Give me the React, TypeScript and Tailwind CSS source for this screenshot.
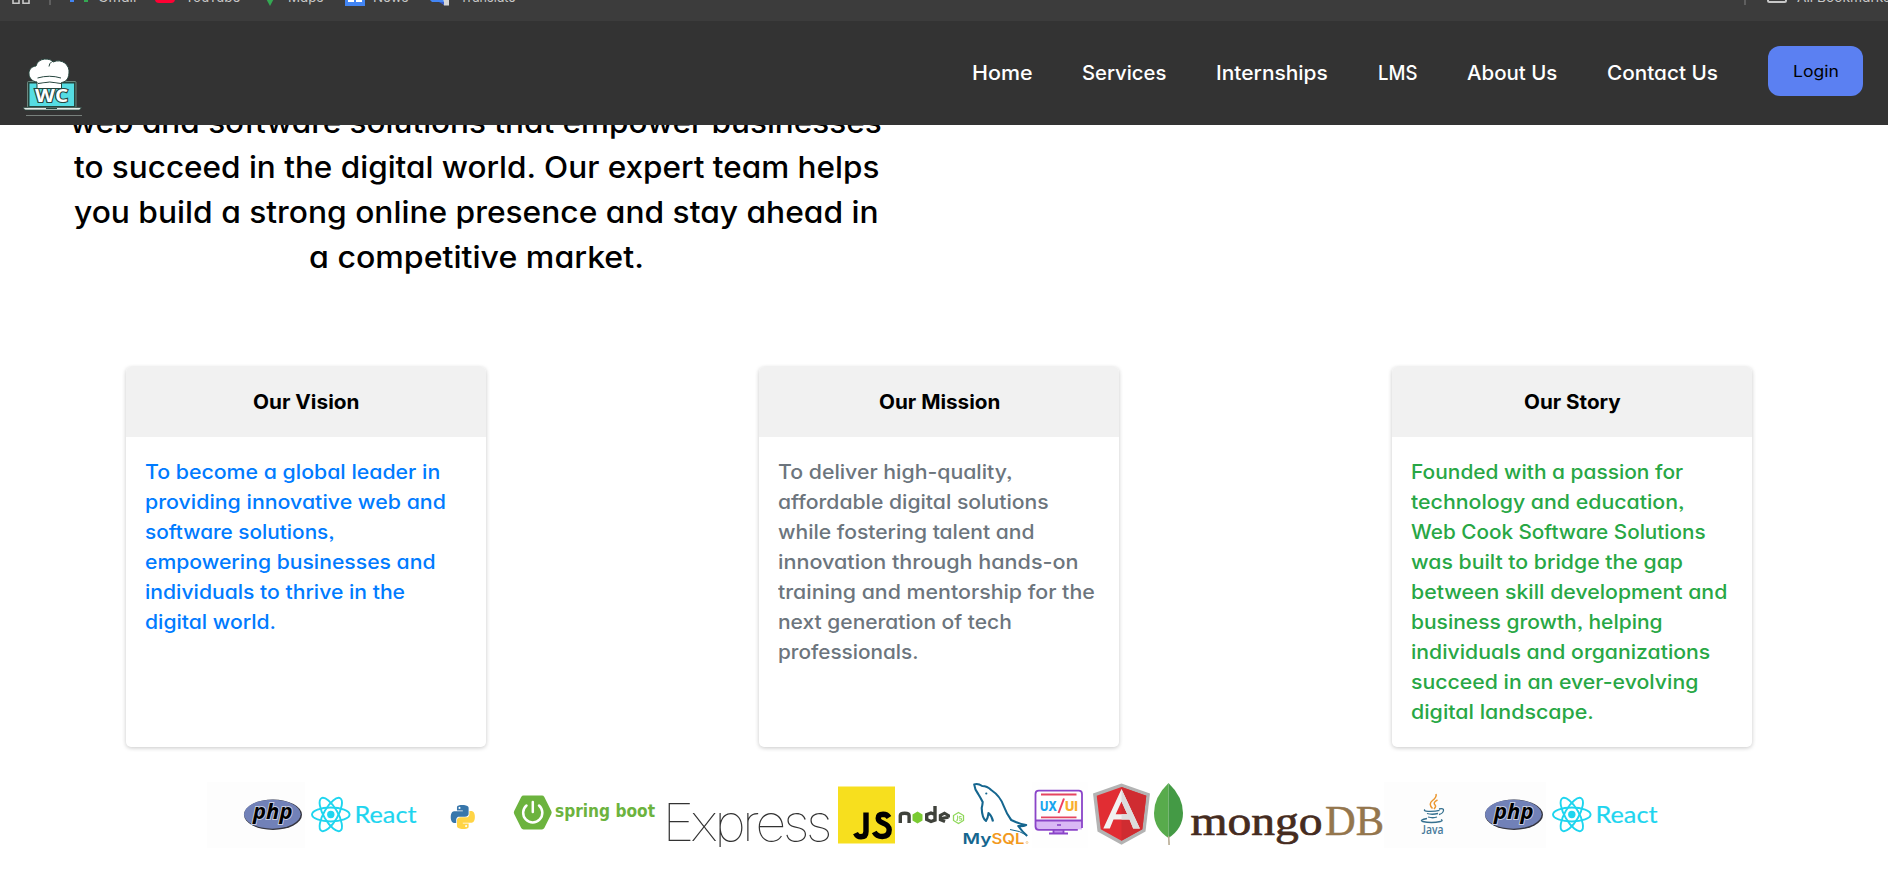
import { useLayoutEffect, useRef, useState, type ReactNode } from 'react';

/* Single line of text, widened so that it fills the given width. */
function Fit({ children, w, className = '' }: { children: string; w: number; className?: string }) {
  const ref = useRef<HTMLSpanElement>(null);
  const [scale, setScale] = useState(1);
  useLayoutEffect(() => {
    if (!ref.current) return;
    setScale(w / ref.current.offsetWidth);
  }, [w, children]);
  return (
    <span className="inline-block text-left" style={{ width: w }}>
      <span
        ref={ref}
        className={`inline-block origin-left whitespace-nowrap ${className}`}
        style={{ transform: `scaleX(${scale})` }}
      >
        {children}
      </span>
    </span>
  );
}

const navItems: [string, number][] = [
  ['Home', 60],
  ['Services', 84],
  ['Internships', 112],
  ['LMS', 39],
  ['About Us', 90],
  ['Contact Us', 111],
];

const intro: [string, number][] = [
  ['web and software solutions that empower businesses', 812],
  ['to succeed in the digital world. Our expert team helps', 805],
  ['you build a strong online presence and stay ahead in', 805],
  ['a competitive market.', 335],
];

const cards: { title: string; titleW: number; color: string; lines: [string, number][] }[] = [
  {
    title: 'Our Vision',
    titleW: 106,
    color: 'text-[#007bff]',
    lines: [
      ['To become a global leader in', 295],
      ['providing innovative web and', 301],
      ['software solutions,', 190],
      ['empowering businesses and', 291],
      ['individuals to thrive in the', 260],
      ['digital world.', 131],
    ],
  },
  {
    title: 'Our Mission',
    titleW: 121,
    color: 'text-[#6c757d]',
    lines: [
      ['To deliver high-quality,', 235],
      ['affordable digital solutions', 271],
      ['while fostering talent and', 257],
      ['innovation through hands-on', 301],
      ['training and mentorship for the', 317],
      ['next generation of tech', 234],
      ['professionals.', 141],
    ],
  },
  {
    title: 'Our Story',
    titleW: 97,
    color: 'text-[#28a745]',
    lines: [
      ['Founded with a passion for', 272],
      ['technology and education,', 274],
      ['Web Cook Software Solutions', 295],
      ['was built to bridge the gap', 272],
      ['between skill development and', 316],
      ['business growth, helping', 252],
      ['individuals and organizations', 299],
      ['succeed in an ever-evolving', 287],
      ['digital landscape.', 183],
    ],
  },
];

function BookmarksBar() {
  return (
    <div className="h-[21px] overflow-hidden bg-[#3c3c3c]">
      <div className="-mt-[15px] flex h-6 items-center text-[13px] leading-6 text-[#c7c7c7]">
        <svg className="ml-3 shrink-0" width="18" height="24" viewBox="0 0 18 24" fill="none" stroke="#c7c7c7" strokeWidth="1.6">
          <path d="M1 2h6v6H1zM11 2h6v6h-6zM1 12.5h6v5.700H1zM11 12.500h6v5.700h-6z" />
        </svg>
        <svg className="ml-[19px] shrink-0" width="2" height="24"><rect width="2" height="20" fill="#5f5f5f" /></svg>
        <svg className="ml-[19px] shrink-0" width="18" height="24">
          <path d="M0 4h4v13H0z" fill="#4285f4" /><path d="M14 4h4v13h-4z" fill="#34a853" /><path d="M0 2l9 6 9-6v4l-9 7-9-7z" fill="#ea4335" />
        </svg>
        <div className="ml-2.5 w-[57px]"><Fit w={38}>Gmail</Fit></div>
        <svg className="shrink-0" width="20" height="24"><rect y="4" width="20" height="14" rx="4" fill="#ff0033" /></svg>
        <div className="ml-2.5 w-[75px]"><Fit w={55}>YouTube</Fit></div>
        <svg className="shrink-0" width="20" height="24"><path d="M3 8h14l-7 13z" fill="#34a853" /></svg>
        <div className="ml-[8px] w-[57px]"><Fit w={36}>Maps</Fit></div>
        <svg className="shrink-0" width="20" height="24">
          <rect y="3" width="20" height="18" fill="#4285f4" /><path d="M3 12h6v5H3zM11 10h6v2h-6zM11 15h6v2h-6z" fill="#fff" />
        </svg>
        <div className="ml-2 w-[57px]"><Fit w={36}>News</Fit></div>
        <svg className="shrink-0" width="20" height="24">
          <path d="M9 8h10v12.500h-5z" fill="#d5d5d5" /><path d="M0 3h9l5 14H2l-2-2z" fill="#4285f4" /><path d="M9 17h5v3z" fill="#3a5bc7" />
        </svg>
        <div className="ml-2.5 w-[60px]"><Fit w={56}>Translate</Fit></div>
        <svg className="ml-auto shrink-0" width="2" height="24"><rect width="2" height="20" fill="#5f5f5f" /></svg>
        <svg className="ml-[21px] shrink-0" width="20" height="24" fill="none" stroke="#c7c7c7" strokeWidth="2">
          <path d="M1 4h6l2 2h10v9.500a1.500 1.500 0 0 1-1.500 1.500h-15A1.500 1.500 0 0 1 1 15.500z" />
        </svg>
        <div className="ml-[10px] w-[91px] shrink-0 overflow-hidden"><Fit w={94}>All Bookmarks</Fit></div>
      </div>
    </div>
  );
}

function BrandLogo() {
  return (
    <svg className="mt-[30px] shrink-0" width="60" height="62" viewBox="23 57 60 62">
      <rect x="27.500" y="81.500" width="48.500" height="26" rx="1" fill="#26453e" stroke="#7c9a90" strokeWidth=".8" />
      <rect x="29.500" y="83.500" width="44.500" height="22.500" fill="#55dde3" />
      <path d="M37 88.500V82c-10-1-11-15-1-16 2-9 15-8 17-4 9-4 17 3 16 11-.500 7-4 9-7.500 9.500v6z" fill="#fff" stroke="#26453e" strokeWidth="1" />
      <path d="M37.500 78q12-3.500 23.500 0M49 66.500q0-3 3-5M38 83.500q12-3 23 0" fill="none" stroke="#26453e" strokeWidth="1" />
      <path d="M38.500 84.500q11-2.500 21.500 0v3q-11-2-21.500 0z" fill="#fff" />
      <text x="35" y="101.500" textLength="33" lengthAdjust="spacingAndGlyphs" fontSize="18" fontWeight="700" fill="#fff" stroke="#26453e" strokeWidth="2.200" paintOrder="stroke" fontFamily="Open Sans, sans-serif">WC</text>
      <path d="M23 107.500h58.500l-2 2.500H25z" fill="#e5ebe8" stroke="#26453e" strokeWidth=".7" />
      <path d="M46 108h11v1H46z" fill="#26453e" />
      <path d="M26 115.500h56" stroke="#78807c" strokeWidth="1" />
    </svg>
  );
}

/* Every logo shares the vertical range of the strip; x and w give its slot. */
function Slot({ x, w, children, className = '' }: { x: number; w: number; children: ReactNode; className?: string }) {
  return (
    <svg className={`shrink-0 overflow-visible ${className}`} width={w} height="66" viewBox={`${x} 782 ${w} 66`}>
      {children}
    </svg>
  );
}

function Php() {
  return (
    <Slot x={207} w={98} className="bg-[#fdfdfd]">
      <ellipse cx="273" cy="814.800" rx="29" ry="15.200" fill="#34343e" />
      <ellipse cx="272.300" cy="814.200" rx="28.300" ry="14.500" fill="#7181b8" />
      <text x="253" y="819" textLength="39.500" lengthAdjust="spacingAndGlyphs" fontSize="21" fontWeight="700" fontStyle="italic" fill="#000" stroke="#c5cbe0" strokeWidth="1.800" paintOrder="stroke" fontFamily="Open Sans, sans-serif">php</text>
    </Slot>
  );
}

function ReactLogo() {
  return (
    <Slot x={305} w={120}>
      <g fill="none" stroke="#1ed5ef" strokeWidth="1.900">
        <ellipse cx="330.800" cy="814.500" rx="18.800" ry="7" />
        <ellipse cx="330.800" cy="814.500" rx="18.800" ry="7" transform="rotate(60 330.800 814.500)" />
        <ellipse cx="330.800" cy="814.500" rx="18.800" ry="7" transform="rotate(120 330.800 814.500)" />
      </g>
      <circle cx="330.800" cy="814.500" r="3.700" fill="#1ed5ef" />
      <text x="354.500" y="823" textLength="62" lengthAdjust="spacingAndGlyphs" fontSize="23.500" fill="#1ed5ef" stroke="#1ed5ef" strokeWidth=".2" fontFamily="Lato, sans-serif">React</text>
    </Slot>
  );
}

const snake =
  'M14.25.18l.9.2.73.26.59.3.45.32.34.34.25.34.16.33.1.3.04.26.02.2-.01.13V8.5l-.05.63-.13.55-.21.46-.26.38-.3.31-.33.25-.35.19-.35.14-.33.1-.3.07-.26.04-.21.02H8.77l-.69.05-.59.14-.5.22-.41.27-.33.32-.27.35-.2.36-.15.37-.1.35-.07.32-.04.27-.02.21v3.06H3.17l-.21-.03-.28-.07-.32-.12-.35-.18-.36-.26-.36-.36-.35-.46-.32-.59-.28-.73-.21-.88-.14-1.05-.05-1.23.06-1.22.16-1.04.24-.87.32-.71.36-.57.4-.44.42-.33.42-.24.4-.16.36-.1.32-.05.24-.01h.16l.06.01h8.16v-.83H6.18l-.01-2.75-.02-.37.05-.34.11-.31.17-.28.25-.26.31-.23.38-.2.44-.18.51-.15.58-.12.64-.1.71-.06.77-.04.84-.02 1.27.05zm-6.3 1.98l-.23.33-.08.41.08.41.23.34.33.22.41.09.41-.09.33-.22.23-.34.08-.41-.08-.41-.23-.33-.33-.22-.41-.09-.41.09z';

function Python() {
  return (
    <Slot x={425} w={80}>
      <g transform="translate(450.800 805)">
        <path d={snake} fill="#3776ab" />
        <path d={snake} fill="#ffd445" transform="rotate(180 12 12)" />
      </g>
    </Slot>
  );
}

function SpringBoot() {
  return (
    <Slot x={505} w={157}>
      <path d="M523.500 795.500h18.500q1.500 0 2.300 1.400l7 14q.8 1.600 0 3.200l-7 14q-.8 1.400-2.300 1.400h-18.500q-1.500 0-2.300-1.400l-7-14q-.8-1.600 0-3.200l7-14q.8-1.400 2.300-1.400z" fill="#6cb33e" />
      <path d="M526.500 805.500a9.600 9.600 0 1 0 12.500 0M532.800 802v10" fill="none" stroke="#fff" strokeWidth="2.500" strokeLinecap="round" />
      <text x="555" y="817" textLength="100" lengthAdjust="spacingAndGlyphs" fontSize="17" fontWeight="700" fill="#6cb33e" fontFamily="DejaVu Sans, sans-serif">spring boot</text>
    </Slot>
  );
}

function Express() {
  return (
    <svg className="shrink-0 overflow-hidden" width="174" height="65" viewBox="662 782 174 65">
      <text x="662.500" y="841" textLength="166.500" lengthAdjust="spacingAndGlyphs" letterSpacing="-3.500" fontSize="51.500" fontWeight="100" fill="#333" fontFamily="Inter, sans-serif">Express</text>
    </svg>
  );
}

function JavaScript() {
  return (
    <Slot x={836} w={61}>
      <rect x="838" y="786.500" width="57" height="57" fill="#f7df1e" />
      <path d="M866 812.500v19q0 5.300-5 5.300-3.700 0-5.500-3.700" fill="none" stroke="#000" strokeWidth="5.400" />
      <path d="M889 817.500q-2-3.200-5.800-3.200-5 .2-5 3.900 0 3 5.200 5 5.800 2.200 5.800 6.600 0 6.500-7 6.700-5.500 0-8-4.500" fill="none" stroke="#000" strokeWidth="5.400" />
    </Slot>
  );
}

function NodeJs() {
  return (
    <Slot x={897} w={67}>
      <g fill="none" stroke="#3f423b" strokeWidth="3.400">
        <path d="M900.300 823v-7.500q0-2.300 4.400-2.300t4.400 2.300v7.500" />
        <path d="M935 806v14l-4 1.500-4.300-2v-4.800l4.300-1.700 4 1.500" />
        <path d="M948.500 817.500v-2l-4-2.300-4.200 2.300v4.200l4.700 2M941 818.500l7.500-1.200" strokeWidth="3" />
      </g>
      <path d="M917.500 811.500l5 3v6l-5 3-5-3v-6z" fill="#7acb32" />
      <path d="M958.500 812.500l5 3v5l-5 3-5-3v-5z" fill="none" stroke="#8fd85a" strokeWidth="1.300" />
      <path d="M957.500 815.500v5l-1.500-.5M961.500 816.500h-2.300v1.800h2.300v1.900h-2.500" fill="none" stroke="#8fd85a" strokeWidth=".9" />
    </Slot>
  );
}

function MySql() {
  return (
    <Slot x={964} w={68}>
      <path d="M993 821.500q-1-5.500-4.500-8.500-.5 5-2.500 8-4-3-4.300-13 .8-3 1-6-2-4-4.500-8-3.500-4.500-4-9.500 3.500-1.500 8 1.500 5 0 9 4 9 6 12.500 16 3 8 7.500 14l4.500 2q5.500 2.500 10.500 3-3 1.500-8 1 4 5.500 9 10" fill="none" stroke="#15668f" strokeWidth="2.100" strokeLinejoin="round" />
      <path d="M1010 829.500q10 1 17 6" fill="none" stroke="#15668f" strokeWidth="1" />
      <circle cx="986.300" cy="793.500" r="1.100" fill="#15668f" />
      <text x="962.500" y="843.500" textLength="29" lengthAdjust="spacingAndGlyphs" fontSize="14" fontWeight="600" fill="#15668f" fontFamily="Inter, sans-serif">My</text>
      <text x="991.500" y="843.500" textLength="33" lengthAdjust="spacingAndGlyphs" fontSize="14" fontWeight="600" fill="#f29a1f" fontFamily="Inter, sans-serif">SQL</text>
      <circle cx="1027" cy="842.500" r="1" fill="none" stroke="#f2b65e" strokeWidth=".6" />
    </Slot>
  );
}

function UxUi() {
  return (
    <Slot x={1032} w={56} className="bg-[#fefefe]">
      <path d="M1035.500 820.500h46.500v9h-43.200q-3.300 0-3.300-3.300z" fill="#d9b8f5" />
      <path d="M1053 829h10v5h-10z" fill="#c390ee" />
      <path d="M1082 828V794q0-3.300-3.300-3.300h-39.900q-3.300 0-3.300 3.300v32.500q0 3.300 3.300 3.300h39M1035.500 820.500h46.500M1053.500 830v3.500M1063.500 830v3.500M1049 833.500h19" fill="none" stroke="#8a44c8" strokeWidth="1.800" />
      <path d="M1057 825h4" stroke="#8a44c8" strokeWidth="1.600" />
      <path d="M1041 794.500h35.500M1041 817.300h35.500" stroke="#e44460" strokeWidth="1.800" />
      <path d="M1064 798.500l-5.500 14.500" stroke="#ef3f62" strokeWidth="2" />
      <text x="1040" y="811" textLength="17" lengthAdjust="spacingAndGlyphs" fontSize="13.500" fontWeight="800" fill="#18a5ee" fontFamily="Inter, sans-serif">UX</text>
      <text x="1065" y="811" textLength="13" lengthAdjust="spacingAndGlyphs" fontSize="13.500" fontWeight="800" fill="#f9ae2b" fontFamily="Inter, sans-serif">UI</text>
    </Slot>
  );
}

function Angular() {
  return (
    <Slot x={1088} w={64}>
      <path d="M1121.500 783.500l28.500 10-4.500 38-24 13.200-24-13.200-4.500-38z" fill="#b3b3b3" />
      <path d="M1121.500 787l24.800 8.700-4 33.500-20.800 11.600-20.800-11.600-4-33.500z" fill="#e12d33" />
      <path d="M1121.500 787l24.800 8.700-4 33.500-20.800 11.600z" fill="#cf2c31" />
      <path d="M1121.500 789l-18.200 39.500h6.500l3.700-9h16l3.700 9h6.700zm0 12.500l5.800 12.700h-11.600z" fill="#f2f2f2" fillRule="evenodd" />
      <path d="M1121.500 789v12.500l5.800 12.700h-5.800v5.300h8l3.700 9h6.700z" fill="#ddd" />
    </Slot>
  );
}

function MongoDb() {
  return (
    <Slot x={1152} w={232}>
      <path d="M1168.500 783q-14.500 14-14.500 30 0 15.500 14.500 25z" fill="#58ab4c" />
      <path d="M1168.500 783q14.500 14 14.500 30 0 15.500-14.500 25z" fill="#449a45" />
      <path d="M1168 836h1.400l.5 9h-1.600z" fill="#b5a88f" />
      <text x="1190.500" y="835" textLength="132" lengthAdjust="spacingAndGlyphs" fontSize="41" fill="#452b20" stroke="#452b20" strokeWidth=".7" fontFamily="Liberation Serif, serif">mongo</text>
      <text x="1325" y="835" textLength="59" lengthAdjust="spacingAndGlyphs" fontSize="43" fill="#94764d" stroke="#94764d" strokeWidth=".5" fontFamily="Liberation Serif, serif">DB</text>
    </Slot>
  );
}

function Java() {
  return (
    <Slot x={1384} w={64} className="bg-[#fdfdfd]">
      <path d="M1436 794q1 3-3.500 6.500-4.500 3.500 0 8M1437.500 800q-5 2.500-2.500 5 1.500 1.500-1 4" fill="none" stroke="#eb9730" strokeWidth="1.500" />
      <path d="M1425 809.500q-2 1.500 3 1.900 7 .3 11.500-1M1427 813.500q5 1.500 11 0M1428 817q5 1.500 9 0M1439 809q5-1 4.500 1.500-.5 3-4.500 4M1427 818.500q-8 1.500-4.500 3 9 2 18 0 3-1 .5-2" fill="none" stroke="#35708f" strokeWidth="1.300" />
      <text x="1421.500" y="834" textLength="22" lengthAdjust="spacingAndGlyphs" fontSize="13" fontWeight="600" fill="#47799a" fontFamily="Open Sans, sans-serif">Java</text>
    </Slot>
  );
}

export default function App() {
  return (
    <div className="h-[887px] overflow-hidden bg-white font-['Inter','Open_Sans',sans-serif] text-black [font-feature-settings:'cv11','ss03']">
      <BookmarksBar />
      <header className="relative z-10 flex h-[104px] items-center justify-between bg-[#333] pr-[25px] pl-[23px]">
        <BrandLogo />
        <nav className="flex items-center gap-[50px] text-xl leading-[30px] font-medium text-white">
          {navItems.map(([label, w]) => (
            <a key={label} className="flex"><Fit w={w}>{label}</Fit></a>
          ))}
          <button className="-mt-1 flex h-[50px] w-[95px] items-center justify-center rounded-xl bg-[#5b80f2] text-base font-normal text-black">
            <Fit w={46}>Login</Fit>
          </button>
        </nav>
      </header>
      <main>
        <section className="-mt-[25px] ml-[56px] w-[840px] text-[30px] leading-[45px] font-medium">
          {intro.map(([line, w]) => (
            <div key={line} className="flex justify-center"><Fit w={w}>{line}</Fit></div>
          ))}
        </section>
        <section className="mt-[87px] flex gap-[273px] pl-[126px]">
          {cards.map((card) => (
            <article key={card.title} className="h-[380px] w-[360px] shrink-0 overflow-hidden rounded-[5px] bg-white text-xl leading-[30px] shadow-[0_1px_4px_rgba(0,0,0,0.22)]">
              <h2 className="flex h-[70px] items-center justify-center bg-[#f1f1f1] font-bold">
                <Fit w={card.titleW}>{card.title}</Fit>
              </h2>
              <div className={`pt-5 pl-[19px] font-medium ${card.color}`}>
                {card.lines.map(([line, w]) => (
                  <div key={line} className="flex"><Fit w={w}>{line}</Fit></div>
                ))}
              </div>
            </article>
          ))}
        </section>
        <section className="mt-[35px] flex pl-[207px]">
          <Php />
          <ReactLogo />
          <Python />
          <SpringBoot />
          <Express />
          <JavaScript />
          <NodeJs />
          <MySql />
          <UxUi />
          <Angular />
          <MongoDb />
          <Java />
          <Php />
          <ReactLogo />
        </section>
      </main>
    </div>
  );
}
